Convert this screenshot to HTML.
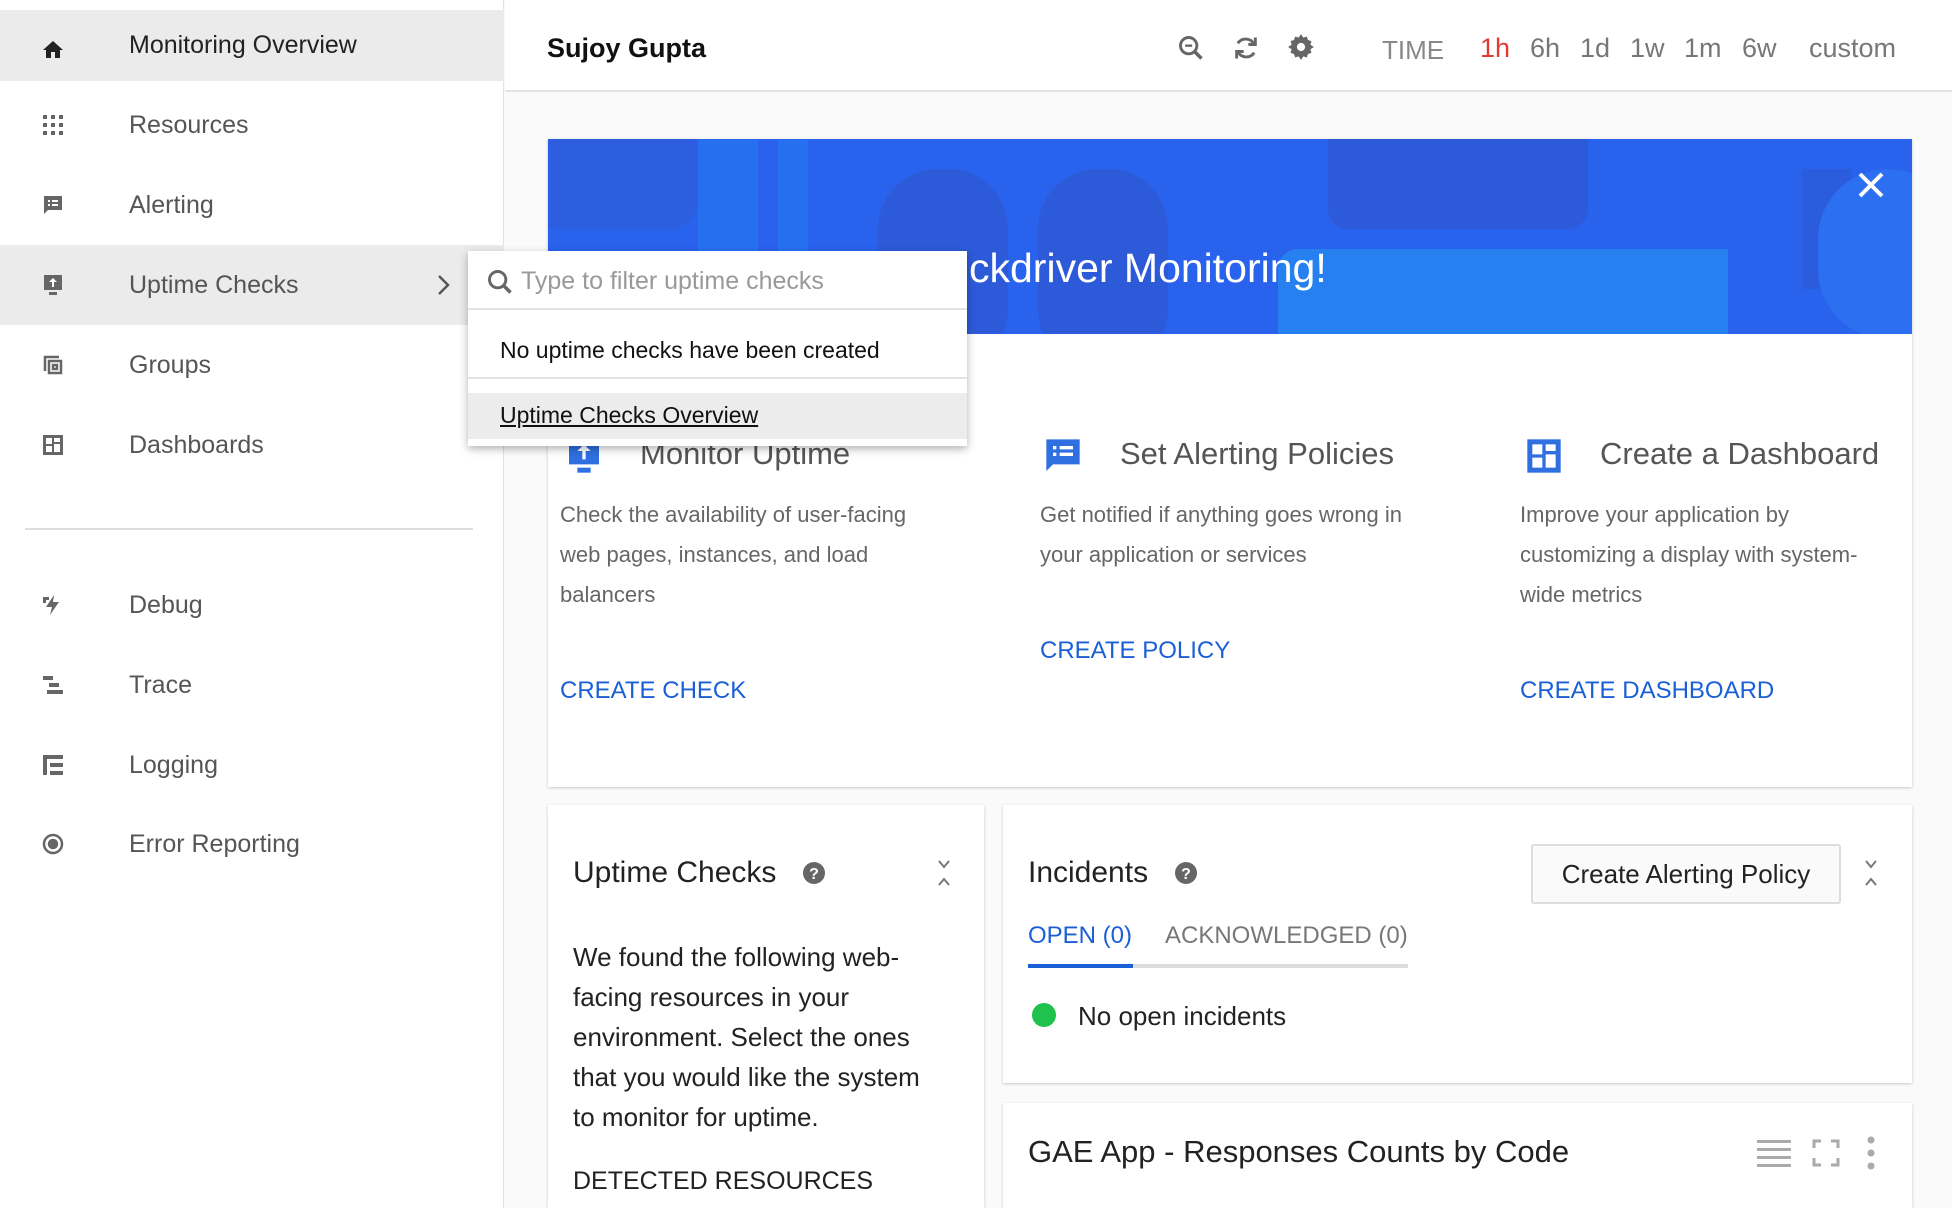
<!DOCTYPE html>
<html style="overflow:hidden;height:1208px"><head><meta charset="utf-8"><style>
*{margin:0;padding:0;box-sizing:border-box}
body{width:1952px;height:1208px;overflow:hidden;background:#fafafa;font-family:"Liberation Sans",sans-serif;position:relative}
.a{position:absolute;white-space:nowrap}
.nav{position:absolute;left:0;width:504px;height:80px;}
.nav .t{position:absolute;left:129px;top:0;line-height:80px;font-size:25px;color:#555}
.nav svg{position:absolute;left:41px;top:28px}
.card{position:absolute;background:#fff;box-shadow:0 1px 3px rgba(0,0,0,.2)}
.desc{font-size:22px;color:#666;line-height:40px;white-space:normal}
.link{font-size:24px;color:#1a5fd6}
</style></head><body>
<!-- sidebar -->
<div class="a" style="left:0;top:0;width:504px;height:1208px;background:#fff;border-right:1px solid #e3e3e3"></div>
<div class="nav" style="top:10px;height:71px;background:#ebebeb"><svg width="24" height="24" viewBox="0 0 24 24"><path d="M10 20v-6h4v6h5v-8h3L12 3 2 12h3v8z" fill="#222"/></svg><div class="t" style="line-height:71px;color:#222">Monitoring Overview</div></div>
<div class="nav" style="top:85px"><svg width="24" height="24" viewBox="0 0 24 24" fill="#666"><rect x="2" y="2" width="4" height="4"/><rect x="10" y="2" width="4" height="4"/><rect x="18" y="2" width="4" height="4"/><rect x="2" y="10" width="4" height="4"/><rect x="10" y="10" width="4" height="4"/><rect x="18" y="10" width="4" height="4"/><rect x="2" y="18" width="4" height="4"/><rect x="10" y="18" width="4" height="4"/><rect x="18" y="18" width="4" height="4"/></svg><div class="t">Resources</div></div>
<div class="nav" style="top:165px"><svg width="24" height="24" viewBox="0 0 24 24"><path d="M3 3h18v14H7l-4 4z" fill="#666"/><path d="M7 7h2v2H7zm4 0h6v2h-6zm-4 4h2v2H7zm4 0h6v2h-6z" fill="#fff"/></svg><div class="t">Alerting</div></div>
<div class="nav" style="top:245px;background:#ebebeb"><svg width="24" height="24" viewBox="0 0 24 24"><path d="M3 2h18v15H3z" fill="#666"/><path d="M12 5l-4 4h3v5h2V9h3z" fill="#fff"/><rect x="8" y="19" width="8" height="3" fill="#666"/></svg><div class="t">Uptime Checks</div><svg style="left:434px;top:28px" width="20" height="24" viewBox="0 0 20 24"><path d="M5 3l9 9-9 9" stroke="#555" stroke-width="2.5" fill="none"/></svg></div>
<div class="nav" style="top:325px"><svg width="24" height="24" viewBox="0 0 24 24" fill="none" stroke="#666" stroke-width="2.5"><path d="M4 18V4h14"/><rect x="8" y="8" width="12" height="12"/><rect x="12" y="12" width="4" height="4"/></svg><div class="t">Groups</div></div>
<div class="nav" style="top:405px"><svg width="24" height="24" viewBox="0 0 24 24"><rect x="2" y="2" width="20" height="20" fill="#666"/><path d="M5 5h6v6H5zm8 0h6v4h-6zm0 6h6v8h-6zM5 13h6v6H5z" fill="#fff"/></svg><div class="t">Dashboards</div></div>
<div class="a" style="left:25px;top:528px;width:448px;height:2px;background:#ddd"></div>
<div class="nav" style="top:565px"><svg width="24" height="24" viewBox="0 0 24 24" fill="#666"><path d="M13 2l-8 12h6l-2 8 9-13h-6z"/><path d="M2 4h6v3H5v3H2z"/></svg><div class="t">Debug</div></div>
<div class="nav" style="top:645px"><svg width="24" height="24" viewBox="0 0 24 24" fill="#666"><rect x="2" y="3" width="10" height="4"/><rect x="8" y="10" width="10" height="4"/><rect x="6" y="17" width="16" height="4"/></svg><div class="t">Trace</div></div>
<div class="nav" style="top:725px"><svg width="24" height="24" viewBox="0 0 24 24" fill="#666"><rect x="2" y="2" width="20" height="4"/><rect x="2" y="2" width="4" height="20"/><rect x="9" y="10" width="13" height="4"/><rect x="9" y="18" width="13" height="4"/></svg><div class="t">Logging</div></div>
<div class="nav" style="top:804px"><svg width="24" height="24" viewBox="0 0 24 24" fill="none" stroke="#666" stroke-width="2.5"><circle cx="12" cy="12" r="9"/><circle cx="12" cy="12" r="4" fill="#666"/></svg><div class="t">Error Reporting</div></div>

<!-- header -->
<div class="a" style="left:505px;top:0;width:1447px;height:92px;background:#fff;border-bottom:2px solid #e3e3e3"></div>
<div class="a" style="left:547px;top:33px;font-size:27px;font-weight:bold;color:#111">Sujoy Gupta</div>
<svg class="a" style="left:1177px;top:34px" width="28" height="28" viewBox="0 0 24 24"><circle cx="10" cy="10" r="7" stroke="#666" stroke-width="2.5" fill="none"/><path d="M15 15l6 6" stroke="#666" stroke-width="3"/><path d="M7 10h6" stroke="#666" stroke-width="2"/></svg>
<svg class="a" style="left:1232px;top:34px" width="28" height="28" viewBox="0 0 24 24" fill="none" stroke="#666" stroke-width="2.5"><path d="M19 9A8 8 0 0 0 5 8M5 15a8 8 0 0 0 14 1"/><path d="M20 3v6h-6M4 21v-6h6" /></svg>
<svg class="a" style="left:1287px;top:33px" width="28" height="28" viewBox="0 0 24 24"><path d="M12 1l2 3 3-1 1 3 3 1-1 3 3 2-3 2 1 3-3 1-1 3-3-1-2 3-2-3-3 1-1-3-3-1 1-3-3-2 3-2-1-3 3-1 1-3 3 1z" fill="#666"/><circle cx="12" cy="12" r="3.5" fill="#fff"/></svg>
<div class="a" style="left:1382px;top:35px;font-size:26px;color:#888">TIME</div>
<div class="a" style="left:1480px;top:33px;font-size:27px;color:#e53935">1h</div>
<div class="a" style="left:1530px;top:33px;font-size:27px;color:#777">6h</div>
<div class="a" style="left:1580px;top:33px;font-size:27px;color:#777">1d</div>
<div class="a" style="left:1630px;top:33px;font-size:27px;color:#777">1w</div>
<div class="a" style="left:1684px;top:33px;font-size:27px;color:#777">1m</div>
<div class="a" style="left:1742px;top:33px;font-size:27px;color:#777">6w</div>
<div class="a" style="left:1809px;top:33px;font-size:27px;color:#777">custom</div>

<!-- welcome card -->
<div class="card" style="left:548px;top:139px;width:1364px;height:648px"></div>
<div class="a" style="left:548px;top:139px;width:1364px;height:195px;background:#2962ec;overflow:hidden">
 <div class="a" style="left:0;top:0;width:150px;height:90px;background:#2d5ee0;border-radius:0 0 30px 0"></div>
 <div class="a" style="left:150px;top:0;width:60px;height:195px;background:#2670f0"></div>
 <div class="a" style="left:230px;top:0;width:30px;height:195px;background:#2670f0"></div>
 <div class="a" style="left:330px;top:30px;width:130px;height:200px;border-radius:60px;background:#2d5ad8"></div>
 <div class="a" style="left:490px;top:30px;width:130px;height:200px;border-radius:60px;background:#2d5ad8"></div>
 <div class="a" style="left:780px;top:0;width:260px;height:90px;background:#2d5ad8;border-radius:0 0 20px 20px"></div>
 <div class="a" style="left:730px;top:110px;width:450px;height:85px;background:#2680f0;border-radius:20px 0 0 0"></div>
 <div class="a" style="left:1254px;top:30px;width:50px;height:120px;background:#2d5ad8;opacity:.7"></div>
 <div class="a" style="left:1270px;top:30px;width:140px;height:170px;border-radius:70px;background:#2c6ff0"></div>
</div>
<div class="a" style="left:969px;top:245px;font-size:41px;color:#fff">ckdriver Monitoring!</div>
<svg class="a" style="left:1856px;top:170px" width="30" height="30" viewBox="0 0 30 30"><path d="M4 4l22 22M26 4L4 26" stroke="#fff" stroke-width="4"/></svg>

<svg class="a" style="left:564px;top:436px" width="40" height="40" viewBox="0 0 24 24"><path d="M3 2h18v15H3z" fill="#2f6fe0"/><path d="M12 5l-4 4h3v5h2V9h3z" fill="#fff"/><rect x="8" y="19" width="8" height="3" fill="#2f6fe0"/></svg>
<div class="a" style="left:640px;top:436px;font-size:31px;color:#555">Monitor Uptime</div>
<div class="a desc" style="left:560px;top:495px;width:385px">Check the availability of user-facing web pages, instances, and load balancers</div>
<div class="a link" style="left:560px;top:677px">CREATE CHECK</div>

<svg class="a" style="left:1043px;top:436px" width="40" height="40" viewBox="0 0 24 24"><path d="M2 2h20v15H6l-4 4z" fill="#2f6fe0"/><path d="M6 6h2v2H6zm4 0h8v2h-8zm-4 4h2v2H6zm4 0h8v2h-8z" fill="#fff"/></svg>
<div class="a" style="left:1120px;top:436px;font-size:31px;color:#555">Set Alerting Policies</div>
<div class="a desc" style="left:1040px;top:495px;width:370px">Get notified if anything goes wrong in your application or services</div>
<div class="a link" style="left:1040px;top:637px">CREATE POLICY</div>

<svg class="a" style="left:1524px;top:436px" width="40" height="40" viewBox="0 0 24 24"><rect x="2" y="2" width="20" height="20" fill="#2f6fe0"/><path d="M5 5h6v6H5zm8 0h6v4h-6zm0 6h6v8h-6zM5 13h6v6H5z" fill="#fff"/></svg>
<div class="a" style="left:1600px;top:436px;font-size:31px;color:#555">Create a Dashboard</div>
<div class="a desc" style="left:1520px;top:495px;width:380px">Improve your application by customizing a display with system-wide metrics</div>
<div class="a link" style="left:1520px;top:677px">CREATE DASHBOARD</div>

<!-- uptime checks card -->
<div class="card" style="left:548px;top:805px;width:436px;height:403px"></div>
<div class="a" style="left:573px;top:856px;font-size:30px;color:#222">Uptime Checks</div>
<svg class="a" style="left:802px;top:861px" width="24" height="24" viewBox="0 0 24 24"><circle cx="12" cy="12" r="11" fill="#666"/><text x="12" y="18" text-anchor="middle" font-size="16" font-weight="bold" fill="#fff" font-family="Liberation Sans">?</text></svg>
<svg class="a" style="left:934px;top:858px" width="20" height="30" viewBox="0 0 20 30"><path d="M5 3l5 6 5-6M5 27l5-6 5 6" stroke="#777" stroke-width="2" fill="none"/></svg>
<div class="a" style="left:573px;top:937px;width:375px;font-size:26px;line-height:40px;color:#222;white-space:normal">We found the following web-facing resources in your environment. Select the ones that you would like the system to monitor for uptime.</div>
<div class="a" style="left:573px;top:1167px;font-size:25px;color:#222">DETECTED RESOURCES</div>

<!-- incidents card -->
<div class="card" style="left:1003px;top:805px;width:909px;height:278px"></div>
<div class="a" style="left:1028px;top:856px;font-size:30px;color:#222">Incidents</div>
<svg class="a" style="left:1174px;top:861px" width="24" height="24" viewBox="0 0 24 24"><circle cx="12" cy="12" r="11" fill="#666"/><text x="12" y="18" text-anchor="middle" font-size="16" font-weight="bold" fill="#fff" font-family="Liberation Sans">?</text></svg>
<div class="a" style="left:1531px;top:844px;width:310px;height:60px;border:2px solid #ddd;border-radius:3px;background:#fafafa;font-size:26px;color:#222;line-height:56px;text-align:center">Create Alerting Policy</div>
<svg class="a" style="left:1861px;top:858px" width="20" height="30" viewBox="0 0 20 30"><path d="M5 3l5 6 5-6M5 27l5-6 5 6" stroke="#777" stroke-width="2" fill="none"/></svg>
<div class="a" style="left:1028px;top:922px;font-size:24px;color:#1a5fd6">OPEN (0)</div>
<div class="a" style="left:1165px;top:922px;font-size:24px;color:#777">ACKNOWLEDGED (0)</div>
<div class="a" style="left:1028px;top:964px;width:380px;height:4px;background:#ddd"></div>
<div class="a" style="left:1028px;top:964px;width:105px;height:4px;background:#1a5fd6"></div>
<div class="a" style="left:1032px;top:1003px;width:24px;height:24px;border-radius:50%;background:#1ec24c"></div>
<div class="a" style="left:1078px;top:1001px;font-size:26px;color:#222">No open incidents</div>

<!-- GAE card -->
<div class="card" style="left:1003px;top:1103px;width:909px;height:105px"></div>
<div class="a" style="left:1028px;top:1134px;font-size:31px;color:#222">GAE App - Responses Counts by Code</div>
<svg class="a" style="left:1757px;top:1138px" width="34" height="30" viewBox="0 0 34 30" fill="#aaa"><rect x="0" y="2" width="34" height="3"/><rect x="0" y="10" width="34" height="3"/><rect x="0" y="18" width="34" height="3"/><rect x="0" y="26" width="34" height="3"/></svg>
<svg class="a" style="left:1812px;top:1139px" width="28" height="28" viewBox="0 0 28 28" fill="none" stroke="#aaa" stroke-width="3"><path d="M2 9V2h7M19 2h7v7M26 19v7h-7M9 26H2v-7"/></svg>
<svg class="a" style="left:1865px;top:1136px" width="12" height="34" viewBox="0 0 12 34" fill="#aaa"><circle cx="6" cy="4" r="3.5"/><circle cx="6" cy="17" r="3.5"/><circle cx="6" cy="30" r="3.5"/></svg>

<!-- popup -->
<div class="a" style="left:468px;top:251px;width:499px;height:195px;background:#fff;box-shadow:0 3px 8px rgba(0,0,0,.3)">
 <svg class="a" style="left:18px;top:17px" width="28" height="28" viewBox="0 0 24 24"><circle cx="10" cy="10" r="7" stroke="#666" stroke-width="2.5" fill="none"/><path d="M15 15l6 6" stroke="#666" stroke-width="3"/></svg>
 <div class="a" style="left:53px;top:16px;font-size:25px;color:#999">Type to filter uptime checks</div>
 <div class="a" style="left:0;top:57px;width:499px;height:2px;background:#e3e3e3"></div>
 <div class="a" style="left:32px;top:86px;font-size:23px;color:#111">No uptime checks have been created</div>
 <div class="a" style="left:0;top:126px;width:499px;height:2px;background:#e3e3e3"></div>
 <div class="a" style="left:0;top:142px;width:499px;height:46px;background:#ececec"></div>
 <div class="a" style="left:32px;top:151px;font-size:23px;color:#111;text-decoration:underline">Uptime Checks Overview</div>
</div>
</body></html>
